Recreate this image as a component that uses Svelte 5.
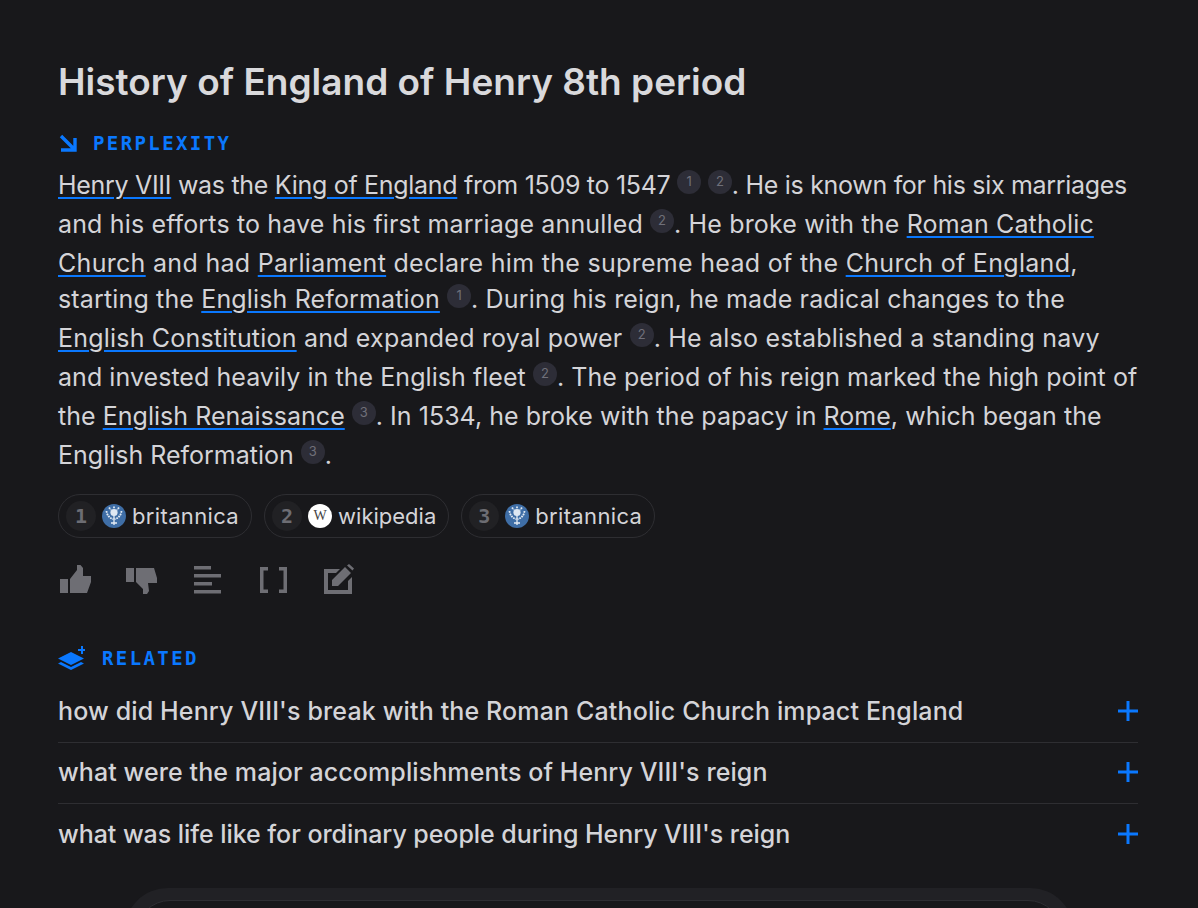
<script>
  // ls: per-line tracking so the lines end where the reference's do
  const lines = [
    { ls: -0.3, parts: [['l', 'Henry VIII'], ' was the ', ['l', 'King of England'], ' from 1509 to 1547 ', ['c', 1], ' ', ['c', 2], '. He is known for his six marriages'] },
    { ls: 0.15, parts: ['and his efforts to have his first marriage annulled ', ['c', 2], '. He broke with the ', ['l', 'Roman Catholic']] },
    { ls: 0.3, parts: [['l', 'Church'], ' and had ', ['l', 'Parliament'], ' declare him the supreme head of the ', ['l', 'Church of England'], ','] },
    { ls: 0.15, parts: ['starting the ', ['l', 'English Reformation'], ' ', ['c', 1], '. During his reign, he made radical changes to the'] },
    { ls: 0.2, parts: [['l', 'English Constitution'], ' and expanded royal power ', ['c', 2], '. He also established a standing navy'] },
    { ls: 0.05, parts: ['and invested heavily in the English fleet ', ['c', 2], '. The period of his reign marked the high point of'] },
    { ls: 0.03, parts: ['the ', ['l', 'English Renaissance'], ' ', ['c', 3], '. In 1534, he broke with the papacy in ', ['l', 'Rome'], ', which began the'] },
    { ls: 0, parts: ['English Reformation ', ['c', 3], '.'] }
  ];

  const sources = [
    { n: 1, name: 'britannica', kind: 'b', ls: 0.35 },
    { n: 2, name: 'wikipedia', kind: 'w', ls: 0 },
    { n: 3, name: 'britannica', kind: 'b', ls: 0.35 }
  ];

  const related = [
    { ls: 0.14, text: "how did Henry VIII's break with the Roman Catholic Church impact England" },
    { ls: 0.09, text: "what were the major accomplishments of Henry VIII's reign" },
    { ls: -0.05, text: "what was life like for ordinary people during Henry VIII's reign" }
  ];
</script>

<main class="page">
  <h1>History of England of Henry 8th period</h1>

  <div class="label answer-label">
    <svg width="18" height="18" viewBox="0 0 18 18" aria-hidden="true">
      <path d="M2 2 15 15M16 4V16H2" fill="none" stroke="currentColor" stroke-width="3.4" />
    </svg>
    <span>PERPLEXITY</span>
  </div>

  <div class="answer">
    {#each lines as line}
      <div class="line" style="letter-spacing: {line.ls}px">
        {#each line.parts as part}
          {#if typeof part === 'string'}{part}{:else if part[0] === 'l'}<a href="#top">{part[1]}</a>{:else}<span class="cite">{part[1]}</span>{/if}
        {/each}
      </div>
    {/each}
  </div>

  <div class="sources">
    {#each sources as s}
      <div class="chip">
        <span class="num">{s.n}</span>
        {#if s.kind === 'b'}
          <svg class="fav" viewBox="0 0 24 24" aria-hidden="true">
            <circle cx="12" cy="12" r="12" fill="#3f6ea6" />
            <path d="M12 11v10M9 19h6" stroke="#e6edf5" stroke-width="1.3" fill="none" />
            <circle cx="12" cy="8.500" r="3.600" fill="#dfe8f2" />
            <path d="M4.500 7c.5 4.500 3.500 7.500 7 8M19.500 7c-.5 4.500-3.500 7.500-7 8M7 3.500 9 6M17 3.500 15 6M12 2.500V5" stroke="#dfe8f2" stroke-width="1.800" fill="none" stroke-dasharray="1.800 .8" />
          </svg>
        {:else}
          <span class="wiki">W</span>
        {/if}
        <span class="name" style="letter-spacing: {s.ls}px">{s.name}</span>
      </div>
    {/each}
  </div>

  <div class="actions">
    <svg class="act" width="32" height="32" viewBox="0 0 32 32" aria-hidden="true">
      <path d="M1 15h8v14H1zM11 15l7-9V1h3.500l2.500 3v8h8v6l-4 11H11z" />
    </svg>
    <svg class="act" width="32" height="32" viewBox="0 0 32 32" aria-hidden="true">
      <path d="M1 4h8v14H1zM11 4v14l7 7v5h4l2-3-1-8h9v-5l-3-10z" />
    </svg>
    <svg class="act" width="32" height="32" viewBox="0 0 32 32" aria-hidden="true">
      <path d="M3 2h17v3.500H3zM3 10h27v3.500H3zM3 18h18v3.500H3zM3 26h27v3.500H3z" />
    </svg>
    <svg class="act" width="32" height="32" viewBox="0 0 32 32" aria-hidden="true">
      <path d="M11 3v3.500H6.500v19H11V29H3V3zM22 3h8v26h-8v-3.500h4.500v-19H22z" />
    </svg>
    <svg class="act" width="32" height="32" viewBox="0 0 32 32" aria-hidden="true">
      <path d="M1 5h16l-4 4H5v17h20V17l4-4v17H1zM9 22v-6L22 3l6 6-13 13zM24 1.500 26 0l5 4.500-1.500 2z" />
    </svg>
  </div>

  <div class="label related-label">
    <svg width="27" height="24" viewBox="0 0 27 24" aria-hidden="true">
      <path d="M13 6 26 12.500 13 19 0 12.500zM3 16l10 5 10-5 3 1.500L13 24 0 17.500zM20 3h3V0h2v3h2.500v2H25v3h-2V5h-3z" fill="currentColor" />
    </svg>
    <span>RELATED</span>
  </div>

  <ul class="related">
    {#each related as q}
      <li>
        <span style="letter-spacing: {q.ls}px">{q.text}</span>
        <svg width="20" height="20" viewBox="0 0 20 20" aria-hidden="true">
          <path d="M10 0v20M0 10h20" stroke="currentColor" stroke-width="3" fill="none" />
        </svg>
      </li>
    {/each}
  </ul>

  <div class="composer"><div class="composer-inner"></div></div>
</main>

<style>
  :global(body) {
    margin: 0;
    background: #18181b;
    overflow: hidden;
  }

  .page {
    height: 908px;
    overflow: hidden;
    box-sizing: border-box;
    padding: 60px 60px 0 58px;
    background: #18181b;
    color: #d4d4d8;
    font-family: Inter, 'Noto Sans', sans-serif;
  }

  h1 {
    margin: 0;
    font-size: 37px;
    line-height: 44px;
    font-weight: 600;
    color: #d9d9dc;
  }

  .label {
    display: flex;
    align-items: center;
    color: #0a78ff;
    font-family: 'DejaVu Sans Mono', monospace;
    font-weight: 700;
    font-size: 19px;
    letter-spacing: 2.4px;
  }

  .answer-label {
    margin-top: 27px;
    height: 24px;
    gap: 16px;
    padding-left: 1px;
  }

  .answer {
    margin-top: 12px;
    font-size: 25px;
    line-height: 36px;
  }

  .line {
    white-space: pre;
  }

  .line a {
    color: inherit;
    text-decoration: underline;
    text-decoration-color: #0a78ff;
    text-decoration-thickness: 2px;
    text-underline-offset: 3px;
  }

  .cite {
    display: inline-block;
    width: 24px;
    height: 24px;
    margin-bottom: 12px;
    overflow: hidden;
    vertical-align: -12px;
    border-radius: 50%;
    background: #2d2d37;
    color: #70707a;
    font-size: 13px;
    letter-spacing: 0;
    line-height: 22px;
    text-align: center;
  }

  .sources {
    display: flex;
    gap: 12px;
    margin-top: 18px;
  }

  .chip {
    display: flex;
    align-items: center;
    box-sizing: border-box;
    height: 44px;
    padding: 0 12px 0 7px;
    border: 1px solid #2e2e32;
    border-radius: 22px;
  }

  .num {
    display: grid;
    place-items: center;
    width: 30px;
    height: 30px;
    border-radius: 50%;
    background: #212124;
    color: #6d6d73;
    font-family: 'DejaVu Sans Mono', monospace;
    font-weight: 700;
    font-size: 20px;
  }

  .fav,
  .wiki {
    width: 24px;
    height: 24px;
    margin-left: 6px;
    flex: none;
  }

  .wiki {
    display: grid;
    place-items: center;
    border-radius: 50%;
    background: #fff;
    color: #444;
    font-family: 'Liberation Serif', serif;
    font-size: 14px;
  }

  .name {
    margin-left: 6px;
    font-size: 22px;
    font-weight: 400;
    color: #d4d4d8;
  }

  .actions {
    display: flex;
    gap: 34px;
    margin-top: 26px;
    height: 32px;
    padding-left: 1px;
    color: #6e6e74;
  }

  .act {
    fill: currentColor;
    flex: none;
  }

  .related-label {
    margin-top: 50px;
    height: 24px;
    gap: 17px;
  }

  .related {
    margin: 12px 0 0;
    padding: 0;
    list-style: none;
  }

  .related li {
    display: flex;
    align-items: center;
    justify-content: space-between;
    height: 61px;
    box-sizing: border-box;
    padding-bottom: 2px;
    border-bottom: 1px solid #2e2e32;
    font-size: 25px;
    font-weight: 500;
    color: #d4d4d8;
  }

  .related li:last-child {
    border-bottom: 0;
  }

  .related svg {
    color: #0a78ff;
    flex: none;
  }

  .composer {
    box-sizing: border-box;
    width: 950px;
    height: 90px;
    margin: 23px auto 0 66px;
    padding: 12px 12px 0;
    border-radius: 44px;
    background: #212125;
  }

  .composer-inner {
    height: 80px;
    border: 1px solid #2e2e33;
    border-radius: 34px;
    background: #18181b;
  }
</style>
